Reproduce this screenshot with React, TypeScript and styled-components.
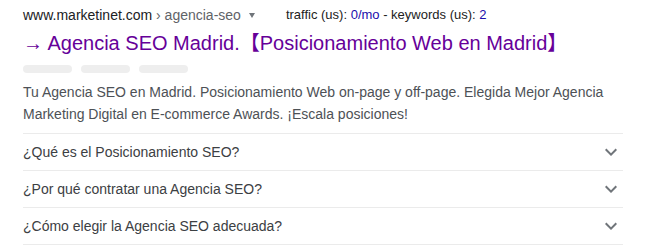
import React from 'react'
import styled, { createGlobalStyle } from 'styled-components'

const GlobalStyle = createGlobalStyle`
  html, body {
    margin: 0;
    padding: 0;
    background: #fff;
  }
  body {
    font-family: 'Liberation Sans', Arial, 'Noto Sans CJK JP', sans-serif;
  }
`

const Result = styled.div`
  width: 600px;
  padding: 5px 0 0 23px;
`

const UrlRow = styled.div`
  display: flex;
  align-items: center;
  height: 20px;
  font-size: 14px;
  line-height: 20px;
`

const Domain = styled.span`
  color: #202124;
`

const Path = styled.span`
  color: #5f6368;
`

const Caret = styled.span`
  display: inline-block;
  width: 0;
  height: 0;
  margin: 1px 0 0 8px;
  border-left: 3.5px solid transparent;
  border-right: 3.5px solid transparent;
  border-top: 5px solid #70757a;
`

const Stats = styled.span`
  margin-left: 31px;
  font-size: 13px;
  color: #222;
`

const Num = styled.span`
  color: #1a0dab;
`

const Title = styled.h3`
  margin: 5px 0 0;
  font-size: 20px;
  line-height: 26px;
  font-weight: normal;
  color: #660099;
  white-space: nowrap;
`

const Bars = styled.div`
  display: flex;
  gap: 9px;
  margin-top: 9px;
`

const Bar = styled.div`
  width: 49px;
  height: 8px;
  border-radius: 4px;
  background: #eeeeee;
`

const Snippet = styled.p`
  margin: 8px 0 8px;
  font-size: 14px;
  line-height: 22px;
  color: #4d5156;
`

const Faq = styled.div`
  border-top: 1px solid #ebebeb;
`

const FaqRow = styled.div`
  display: flex;
  align-items: center;
  justify-content: space-between;
  height: 36px;
  border-bottom: 1px solid #ebebeb;
  font-size: 14px;
  color: #3c4043;
`

const Chevron = () => (
  <svg width='24' height='24' viewBox='0 0 24 24' fill='#70757a'>
    <path d='M16.59 8.59L12 13.17 7.41 8.59 6 10l6 6 6-6z' />
  </svg>
)

const questions = [
  '¿Qué es el Posicionamiento SEO?',
  '¿Por qué contratar una Agencia SEO?',
  '¿Cómo elegir la Agencia SEO adecuada?',
]

const App: React.FC = () => {
  return (
    <>
      <GlobalStyle />
      <Result>
        <UrlRow>
          <Domain>www.marketinet.com</Domain>
          <Path>&nbsp;› agencia-seo</Path>
          <Caret />
          <Stats>
            traffic (us): <Num>0/mo</Num> - keywords (us): <Num>2</Num>
          </Stats>
        </UrlRow>
        <Title>→ Agencia SEO Madrid.【Posicionamiento Web en Madrid】</Title>
        <Bars>
          <Bar />
          <Bar />
          <Bar />
        </Bars>
        <Snippet>
          Tu Agencia SEO en Madrid. Posicionamiento Web on-page y off-page. Elegida Mejor Agencia
          Marketing Digital en E-commerce Awards. ¡Escala posiciones!
        </Snippet>
        <Faq>
          {questions.map((q) => (
            <FaqRow key={q}>
              <span>{q}</span>
              <Chevron />
            </FaqRow>
          ))}
        </Faq>
      </Result>
    </>
  )
}

export default App
